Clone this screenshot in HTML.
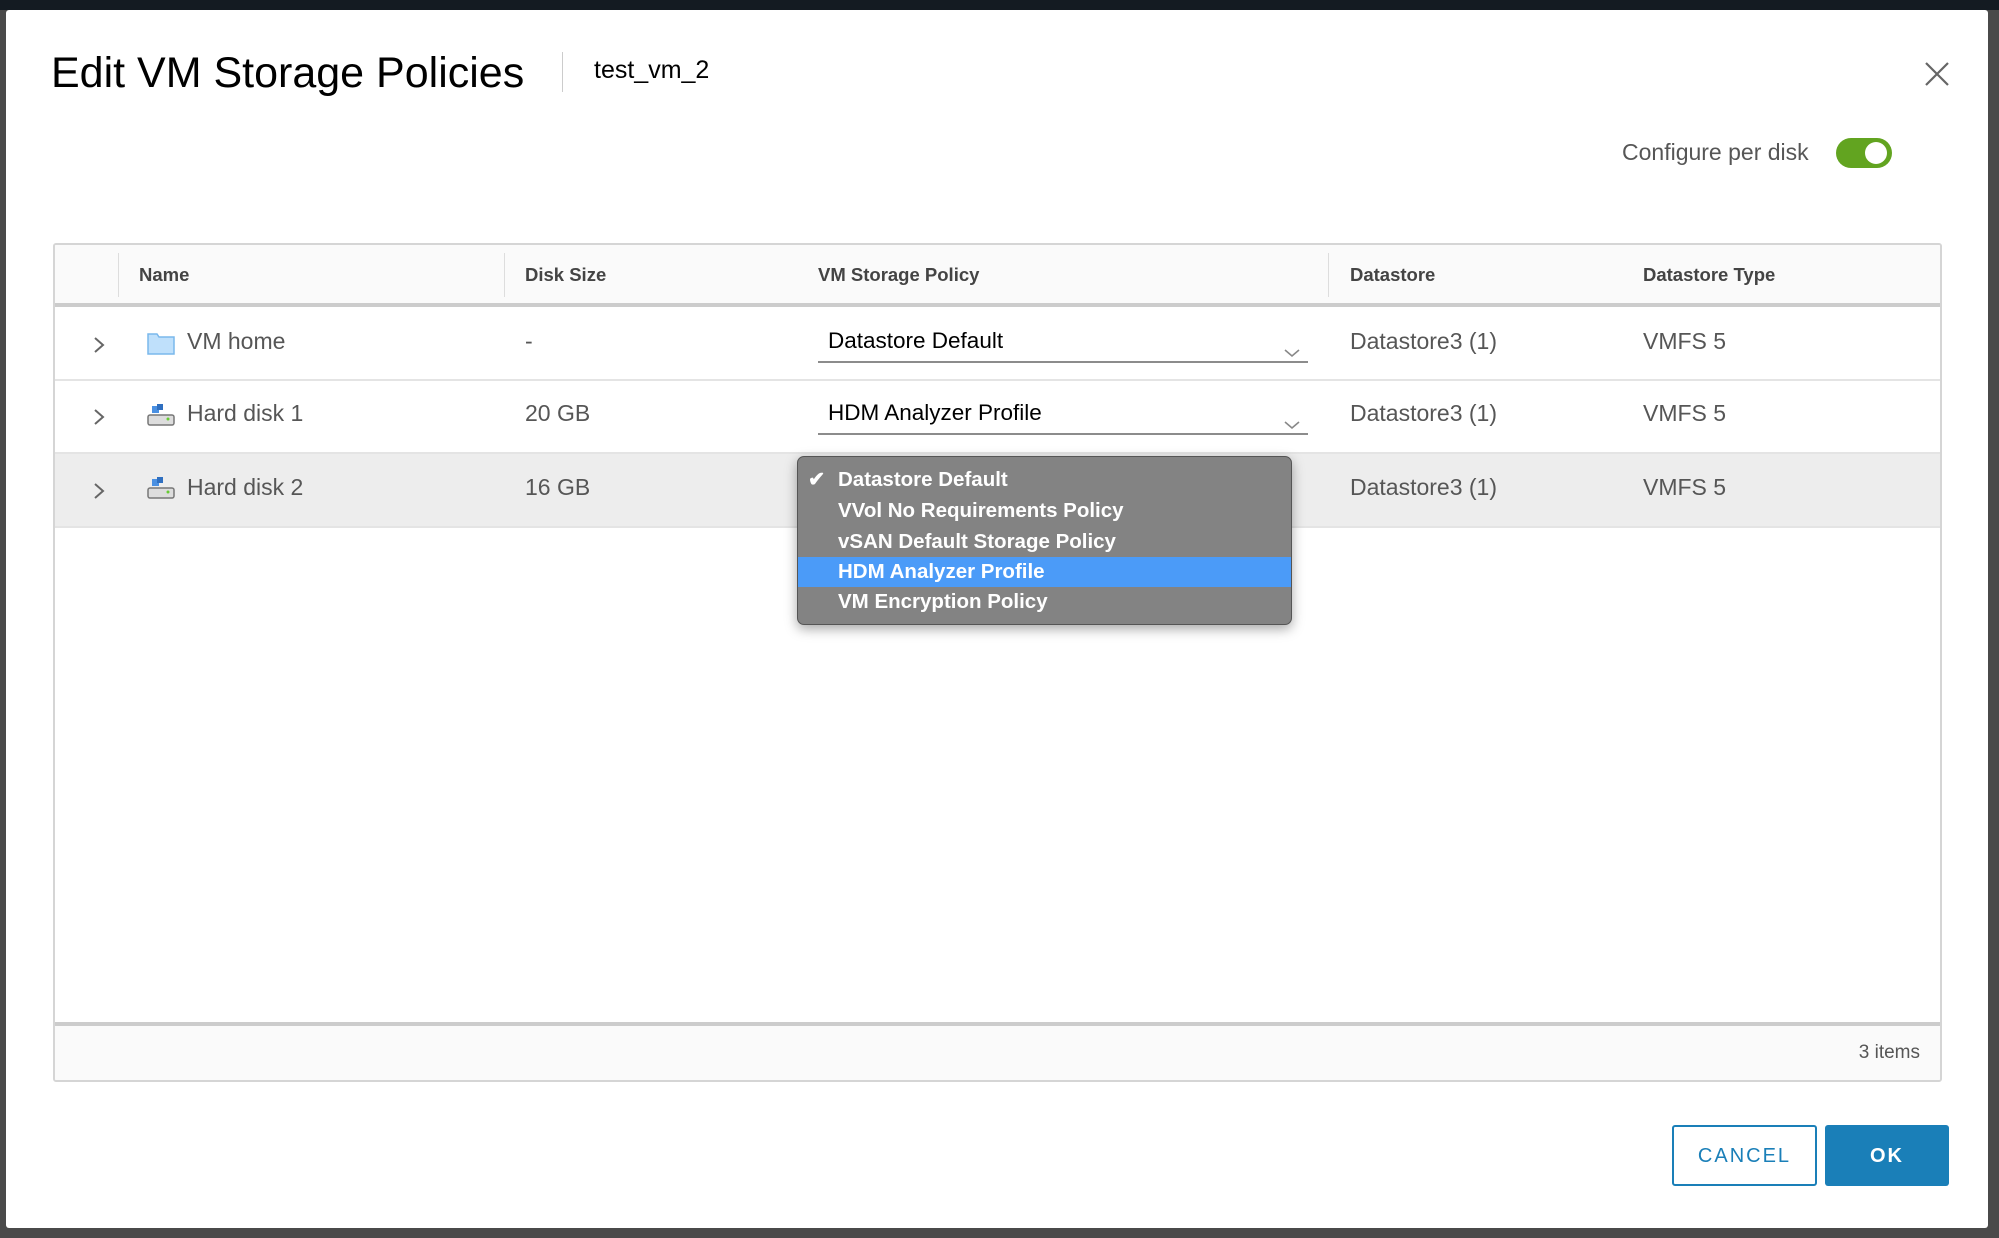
<!DOCTYPE html>
<html><head><meta charset="utf-8"><style>
*{box-sizing:border-box;margin:0;padding:0}
body{width:1999px;height:1238px;overflow:hidden;background:#4a4a4a;font-family:"Liberation Sans",sans-serif;position:relative}
.top{position:absolute;left:0;top:0;width:1999px;height:10px;background:#141b22}
.modal{position:absolute;left:6px;top:10px;width:1982px;height:1218px;background:#fff;border-radius:3px}
.a{position:absolute}
.title{left:45px;top:39px;font-size:43px;color:#000;white-space:nowrap}
.sep{left:556px;top:42px;width:1px;height:40px;background:#ccc}
.sub{left:588px;top:46px;font-size:25px;color:#000}
.cfg{left:1616px;top:129px;font-size:23px;color:#565656}
.tog{left:1830px;top:128px;width:56px;height:30px;border-radius:15px;background:#62a420}
.tog i{position:absolute;right:5px;top:4px;width:22px;height:22px;border-radius:50%;background:#fff}
.tbl{left:47px;top:233px;width:1889px;height:839px;border:2px solid #d5d5d5;border-radius:3px;overflow:hidden}
.hdr{position:absolute;left:0;top:0;width:100%;height:62px;background:#fafafa;border-bottom:4px solid #ccc}
.h{position:absolute;top:19px;font-size:18.5px;font-weight:bold;color:#444}
.vs{position:absolute;top:8px;width:1px;height:44px;background:#ddd}
.row{position:absolute;left:0;width:100%;border-bottom:2px solid #e4e4e4}
.c{position:absolute;font-size:23px;color:#565656;white-space:nowrap}
.foot{position:absolute;left:0;top:777px;width:100%;height:62px;background:#fafafa;border-top:4px solid #ccc}
.sel{position:absolute;left:763px;width:490px;border-bottom:2px solid #8c8c8c;height:36px}
.sel span{position:absolute;left:10px;top:1px;font-size:22.5px;color:#000}
.menu{left:791px;top:446px;width:495px;height:169px;background:#838383;border-radius:7px;border:1px solid #555;box-shadow:0 4px 12px rgba(0,0,0,.35)}
.mi{position:absolute;left:0;width:100%;height:30px;font-size:20.5px;font-weight:bold;color:#fff;padding-left:40px;line-height:30px;white-space:nowrap}
.btn{position:absolute;top:1115px;height:61px;font-size:20px;letter-spacing:2px;text-align:center;line-height:59px;border-radius:3px}
</style></head><body>
<div class="top"></div>
<div class="modal">
<div class="a title">Edit VM Storage Policies</div>
<div class="a sep"></div>
<div class="a sub">test_vm_2</div>
<svg class="a" style="left:1918px;top:51px" width="26" height="26" viewBox="0 0 26 26"><path d="M2 2L24 24M24 2L2 24" stroke="#666" stroke-width="2.2"/></svg>
<div class="a cfg">Configure per disk</div>
<div class="a tog"><i></i></div>

<div class="a tbl">
<div class="hdr">
<div class="vs" style="left:63px"></div><div class="vs" style="left:449px"></div><div class="vs" style="left:1273px"></div>
<div class="h" style="left:84px">Name</div>
<div class="h" style="left:470px">Disk Size</div>
<div class="h" style="left:763px">VM Storage Policy</div>
<div class="h" style="left:1295px">Datastore</div>
<div class="h" style="left:1588px">Datastore Type</div>
</div>

<div class="row" style="top:62px;height:74px">
<svg class="a" style="left:38px;top:29px" width="12" height="18"><path d="M2 2L10 9L2 16" stroke="#666" stroke-width="2" fill="none"/></svg>
<svg class="a" style="left:92px;top:24px" width="28" height="24"><path d="M1 3h9l2 3h15v17H1z" fill="#bfe0fb" stroke="#7ab8ec" stroke-width="1.5"/></svg>
<div class="c" style="left:132px;top:21px">VM home</div>
<div class="c" style="left:470px;top:21px">-</div>
<div class="sel" style="top:20px"><span>Datastore Default</span><svg class="a" style="left:466px;top:22px" width="16" height="9"><path d="M1 1L8 7L15 1" stroke="#888" stroke-width="1.6" fill="none"/></svg></div>
<div class="c" style="left:1295px;top:21px">Datastore3 (1)</div>
<div class="c" style="left:1588px;top:21px">VMFS 5</div>
</div>

<div class="row" style="top:136px;height:73px">
<svg class="a" style="left:38px;top:27px" width="12" height="18"><path d="M2 2L10 9L2 16" stroke="#666" stroke-width="2" fill="none"/></svg>
<svg class="a" style="left:92px;top:22px" width="28" height="24"><rect x="1" y="12" width="26" height="10" rx="2" fill="#ddd" stroke="#777" stroke-width="1.5"/><rect x="5" y="3" width="7" height="7" fill="#4a90e2"/><rect x="10" y="1" width="6" height="6" fill="#2f6fc0"/><circle cx="21" cy="16" r="1.5" fill="#6c3"/></svg>
<div class="c" style="left:132px;top:19px">Hard disk 1</div>
<div class="c" style="left:470px;top:19px">20 GB</div>
<div class="sel" style="top:18px"><span>HDM Analyzer Profile</span><svg class="a" style="left:466px;top:22px" width="16" height="9"><path d="M1 1L8 7L15 1" stroke="#888" stroke-width="1.6" fill="none"/></svg></div>
<div class="c" style="left:1295px;top:19px">Datastore3 (1)</div>
<div class="c" style="left:1588px;top:19px">VMFS 5</div>
</div>

<div class="row" style="top:209px;height:74px;background:#ededed">
<svg class="a" style="left:38px;top:28px" width="12" height="18"><path d="M2 2L10 9L2 16" stroke="#666" stroke-width="2" fill="none"/></svg>
<svg class="a" style="left:92px;top:22px" width="28" height="24"><rect x="1" y="12" width="26" height="10" rx="2" fill="#ddd" stroke="#777" stroke-width="1.5"/><rect x="5" y="3" width="7" height="7" fill="#4a90e2"/><rect x="10" y="1" width="6" height="6" fill="#2f6fc0"/><circle cx="21" cy="16" r="1.5" fill="#6c3"/></svg>
<div class="c" style="left:132px;top:20px">Hard disk 2</div>
<div class="c" style="left:470px;top:20px">16 GB</div>
<div class="c" style="left:1295px;top:20px">Datastore3 (1)</div>
<div class="c" style="left:1588px;top:20px">VMFS 5</div>
</div>

<div class="foot"><div class="a" style="right:20px;top:16px;font-size:19px;color:#565656">3 items</div></div>
</div>

<div class="a menu">
<div class="mi" style="top:8px"><span style="position:absolute;left:10px">✔</span>Datastore Default</div>
<div class="mi" style="top:39px">VVol No Requirements Policy</div>
<div class="mi" style="top:70px">vSAN Default Storage Policy</div>
<div class="mi" style="top:100px;background:#4b9bf8">HDM Analyzer Profile</div>
<div class="mi" style="top:130px">VM Encryption Policy</div>
</div>

<div class="btn" style="left:1666px;width:145px;border:2px solid #1a7fb8;color:#1a7fb8">CANCEL</div>
<div class="btn" style="left:1819px;width:124px;background:#1a7fb8;color:#fff;font-weight:bold;line-height:62px">OK</div>
</div>
</body></html>
